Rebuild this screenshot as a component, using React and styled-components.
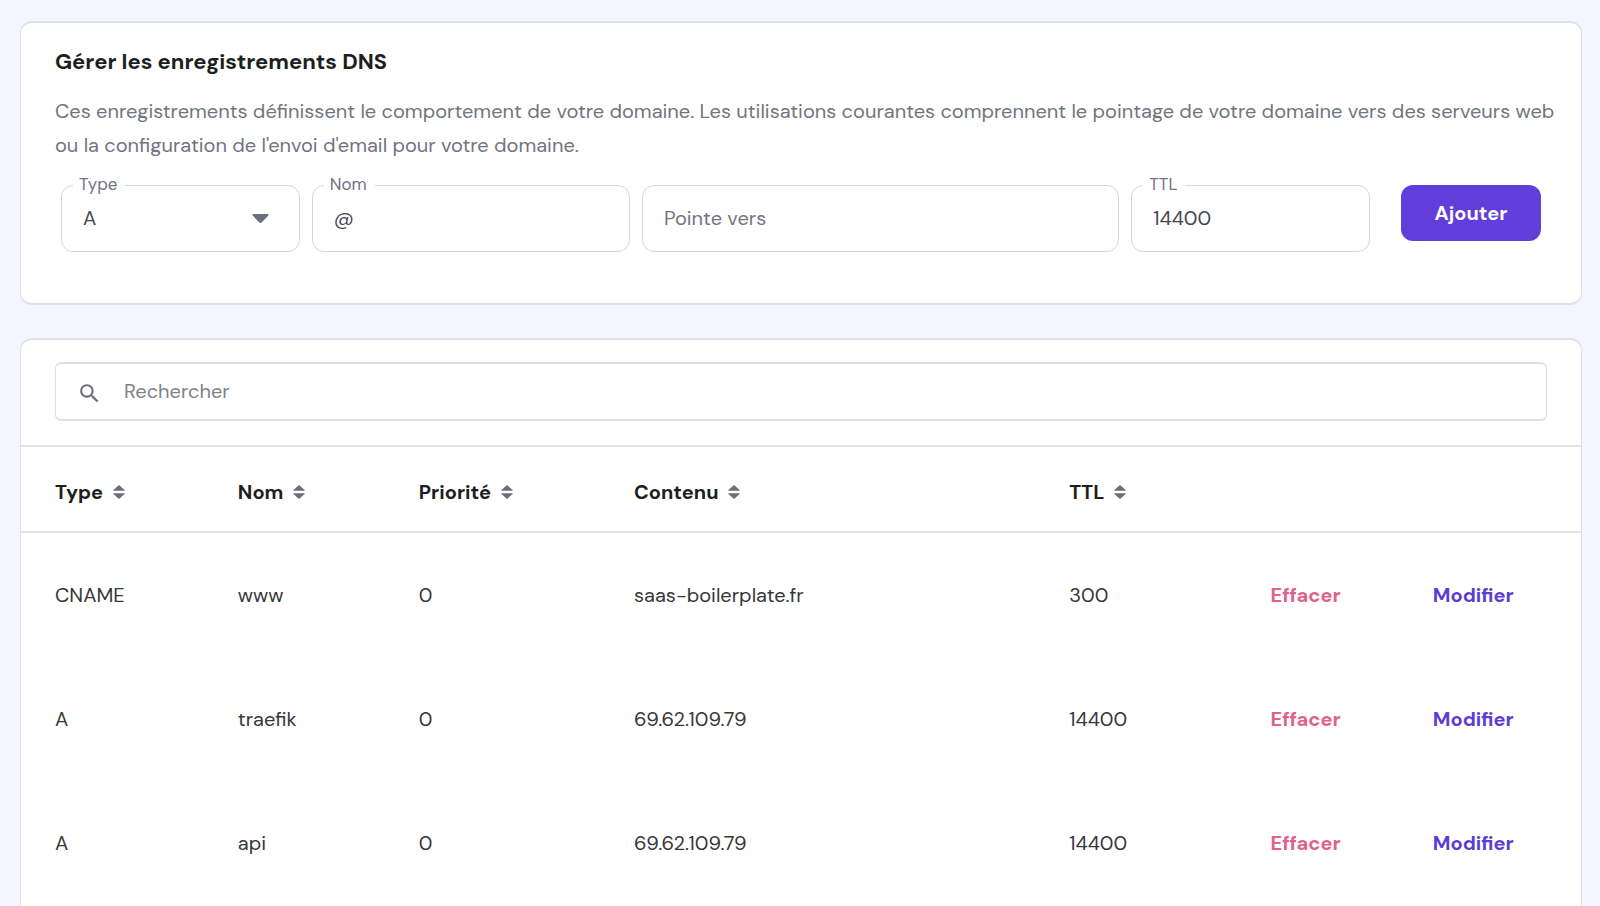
import { useState } from 'react'
import styled, { createGlobalStyle } from 'styled-components'
import { MdSearch } from 'react-icons/md'

const GlobalStyle = createGlobalStyle`
* {
box-sizing: border-box;
}
body {
margin: 0;
background-color: #f4f5ff;
color: #36373a;
}
body, input, select, button {
font-family: 'DM Sans', Inter, 'Liberation Sans', sans-serif;
font-size: 20px;
}
`
const Page = styled.main`
display: flex;
flex-direction: column;
gap: 33px;
padding: 21px 18px 21px 20px;
`
const Card = styled.section`
background-color: white;
border: solid #e0e1e7;
border-width: 2px 1px;
border-radius: 12px;
`
const CardHead = styled.div`
padding: 23px 20px 23px 34px;
`
const Title = styled.h1`
margin: 0 0 16px;
font-size: 22px;
line-height: 32px;
font-weight: 700;
color: #1d1e20;
`
const Description = styled.p`
margin: 0;
line-height: 34px;
color: #727480;
`
const RecordForm = styled.form`
display: flex;
align-items: flex-start;
gap: 31px;
padding: 0 40px 51px;
`
const Fields = styled.div`
display: flex;
flex: 1;
gap: 12px;
`
const Field = styled.div`
position: relative;
flex: ${(props) => props.$grow} 1 0;
min-width: 0;
`
const FieldLabel = styled.label`
position: absolute;
top: -12px;
left: 12px;
padding: 0 8px 0 6px;
background-color: white;
font-size: 17px;
line-height: 22px;
color: #727480;
`
const FieldInput = styled.input`
display: block;
width: 100%;
height: 67px;
padding: 0 21px 2px;
border: 1px solid #d6d7dc;
border-radius: 12px;
background-color: white;
color: #44464f;
outline-color: #613ddb;
&::placeholder {
color: #727480;
opacity: 1;
}
`
const FieldSelect = styled(FieldInput)`
appearance: none;
`
const Caret = styled.svg`
position: absolute;
top: 29px;
right: 31px;
width: 17px;
height: 9px;
fill: #6c6e80;
pointer-events: none;
`
const AddButton = styled.button`
width: 140px;
height: 56px;
border: none;
border-radius: 12px;
background-color: #613ddb;
color: white;
font-weight: 700;
cursor: pointer;
`
const SearchBar = styled.div`
padding: 22px 34px 24px;
border-bottom: 2px solid #e3e3e6;
`
const SearchBox = styled.label`
display: flex;
align-items: center;
gap: 22px;
height: 59px;
padding: 0 21px;
border: solid #e0e0e4;
border-width: 2px 1px;
border-radius: 6px;
color: #6c6e7a;
svg {
margin-top: 3px;
}
`
const SearchInput = styled.input`
flex: 1;
min-width: 0;
padding: 0 0 2px;
border: none;
outline: none;
background: none;
color: #36373a;
&::placeholder {
color: #808289;
opacity: 1;
}
`
const Table = styled.table`
width: 100%;
margin-bottom: 24px;
table-layout: fixed;
border-collapse: separate;
border-spacing: 0;
`
const HeadCell = styled.th`
width: ${(props) => props.$width};
height: 86px;
padding: 6px 0 0;
border-bottom: 2px solid #e3e3e6;
text-align: left;
&:first-child {
padding-left: 34px;
}
`
const Cell = styled.td`
height: 124px;
padding: 0;
&:first-child {
padding-left: 34px;
}
`
const SortButton = styled.button`
display: flex;
align-items: center;
gap: 10px;
padding: 0;
border: none;
background: none;
color: #1d1e20;
font-weight: 700;
cursor: pointer;
`
const SortArrows = styled.svg`
width: 12px;
height: 14px;
fill: #6c6e7a;
`
const RowAction = styled.button`
padding: 0;
border: none;
background: none;
color: ${(props) => (props.$danger ? '#e0628a' : '#5b3dd3')};
font-weight: 700;
cursor: pointer;
`

const types = ['A', 'AAAA', 'CNAME', 'MX', 'TXT', 'NS', 'SRV', 'CAA']

const columns = [
    { key: 'type', title: 'Type', width: '13.9%' },
    { key: 'name', title: 'Nom', width: '11.6%' },
    { key: 'priority', title: 'Priorité', width: '13.8%' },
    { key: 'content', title: 'Contenu', width: '27.9%' },
    { key: 'ttl', title: 'TTL', width: '12.9%' },
]

const initialRecords = [
    { type: 'CNAME', name: 'www', priority: 0, content: 'saas-boilerplate.fr', ttl: 300 },
    { type: 'A', name: 'traefik', priority: 0, content: '69.62.109.79', ttl: 14400 },
    { type: 'A', name: 'api', priority: 0, content: '69.62.109.79', ttl: 14400 },
]

function AddRecord({ onAdd }) {
    const [record, setRecord] = useState({ type: 'A', name: '@', content: '', ttl: '14400' })
    const change = (e) => setRecord({ ...record, [e.target.name]: e.target.value })
    const submit = (e) => {
        e.preventDefault()
        onAdd({ ...record, priority: 0 })
    }
    return (
      <RecordForm onSubmit={submit}>
        <Fields>
          <Field $grow={3}>
            <FieldSelect as="select" id="type" name="type" value={record.type} onChange={change}>
              {types.map((type) => <option key={type}>{type}</option>)}
            </FieldSelect>
            <FieldLabel htmlFor="type">Type</FieldLabel>
            <Caret viewBox="0 0 17 9" aria-hidden="true">
              <path d="M1.6 0h13.8c1 0 1.4 1.1.7 1.8L9.9 8.3c-.8.8-2 .8-2.8 0L.9 1.8C.2 1.1.6 0 1.6 0z" />
            </Caret>
          </Field>
          <Field $grow={4}>
            <FieldInput id="name" name="name" value={record.name} onChange={change} />
            <FieldLabel htmlFor="name">Nom</FieldLabel>
          </Field>
          <Field $grow={6}>
            <FieldInput name="content" aria-label="Pointe vers" placeholder="Pointe vers" value={record.content} onChange={change} />
          </Field>
          <Field $grow={3}>
            <FieldInput id="ttl" name="ttl" value={record.ttl} onChange={change} />
            <FieldLabel htmlFor="ttl">TTL</FieldLabel>
          </Field>
        </Fields>
        <AddButton type="submit">Ajouter</AddButton>
      </RecordForm>
    )
}

function App() {
    const [records, setRecords] = useState(initialRecords)
    const [search, setSearch] = useState('')
    const sortBy = (key) => {
        setRecords([...records].sort((a, b) => String(a[key]).localeCompare(String(b[key]), 'fr', { numeric: true })))
    }
    const visible = records.filter((r) => `${r.type} ${r.name} ${r.content}`.toLowerCase().includes(search.toLowerCase()))
    return (
      <Page>
        <GlobalStyle />
        <Card>
          <CardHead>
            <Title>Gérer les enregistrements DNS</Title>
            <Description>
              Ces enregistrements définissent le comportement de votre domaine. Les utilisations courantes
              comprennent le pointage de votre domaine vers des serveurs web ou la configuration de l'envoi
              d'email pour votre domaine.
            </Description>
          </CardHead>
          <AddRecord onAdd={(record) => setRecords([...records, record])} />
        </Card>
        <Card>
          <SearchBar>
            <SearchBox>
              <MdSearch size={25} aria-hidden="true" />
              <SearchInput type="text" aria-label="Rechercher" placeholder="Rechercher" value={search} onChange={(e) => setSearch(e.target.value)} />
            </SearchBox>
          </SearchBar>
          <Table>
            <thead>
              <tr>
                {columns.map(({ key, title, width }) => (
                  <HeadCell key={key} scope="col" $width={width}>
                    <SortButton type="button" onClick={() => sortBy(key)}>
                      {title}
                      <SortArrows viewBox="0 0 12 14" aria-hidden="true">
                        <path d="M6 0l5.6 5.1c.3.3.1.7-.3.7H.7c-.4 0-.6-.4-.3-.7zM6 14l5.6-5.1c.3-.3.1-.7-.3-.7H.7c-.4 0-.6.4-.3.7z" />
                      </SortArrows>
                    </SortButton>
                  </HeadCell>
                ))}
                <HeadCell as="td" $width="10.4%" />
                <HeadCell as="td" />
              </tr>
            </thead>
            <tbody>
              {visible.map((record) => (
                <tr key={record.type + record.name + record.content}>
                  {columns.map(({ key }) => <Cell key={key}>{record[key]}</Cell>)}
                  <Cell>
                    <RowAction type="button" $danger onClick={() => setRecords(records.filter((r) => r !== record))}>Effacer</RowAction>
                  </Cell>
                  <Cell>
                    <RowAction type="button">Modifier</RowAction>
                  </Cell>
                </tr>
              ))}
            </tbody>
          </Table>
        </Card>
      </Page>
    )
}

export default App
